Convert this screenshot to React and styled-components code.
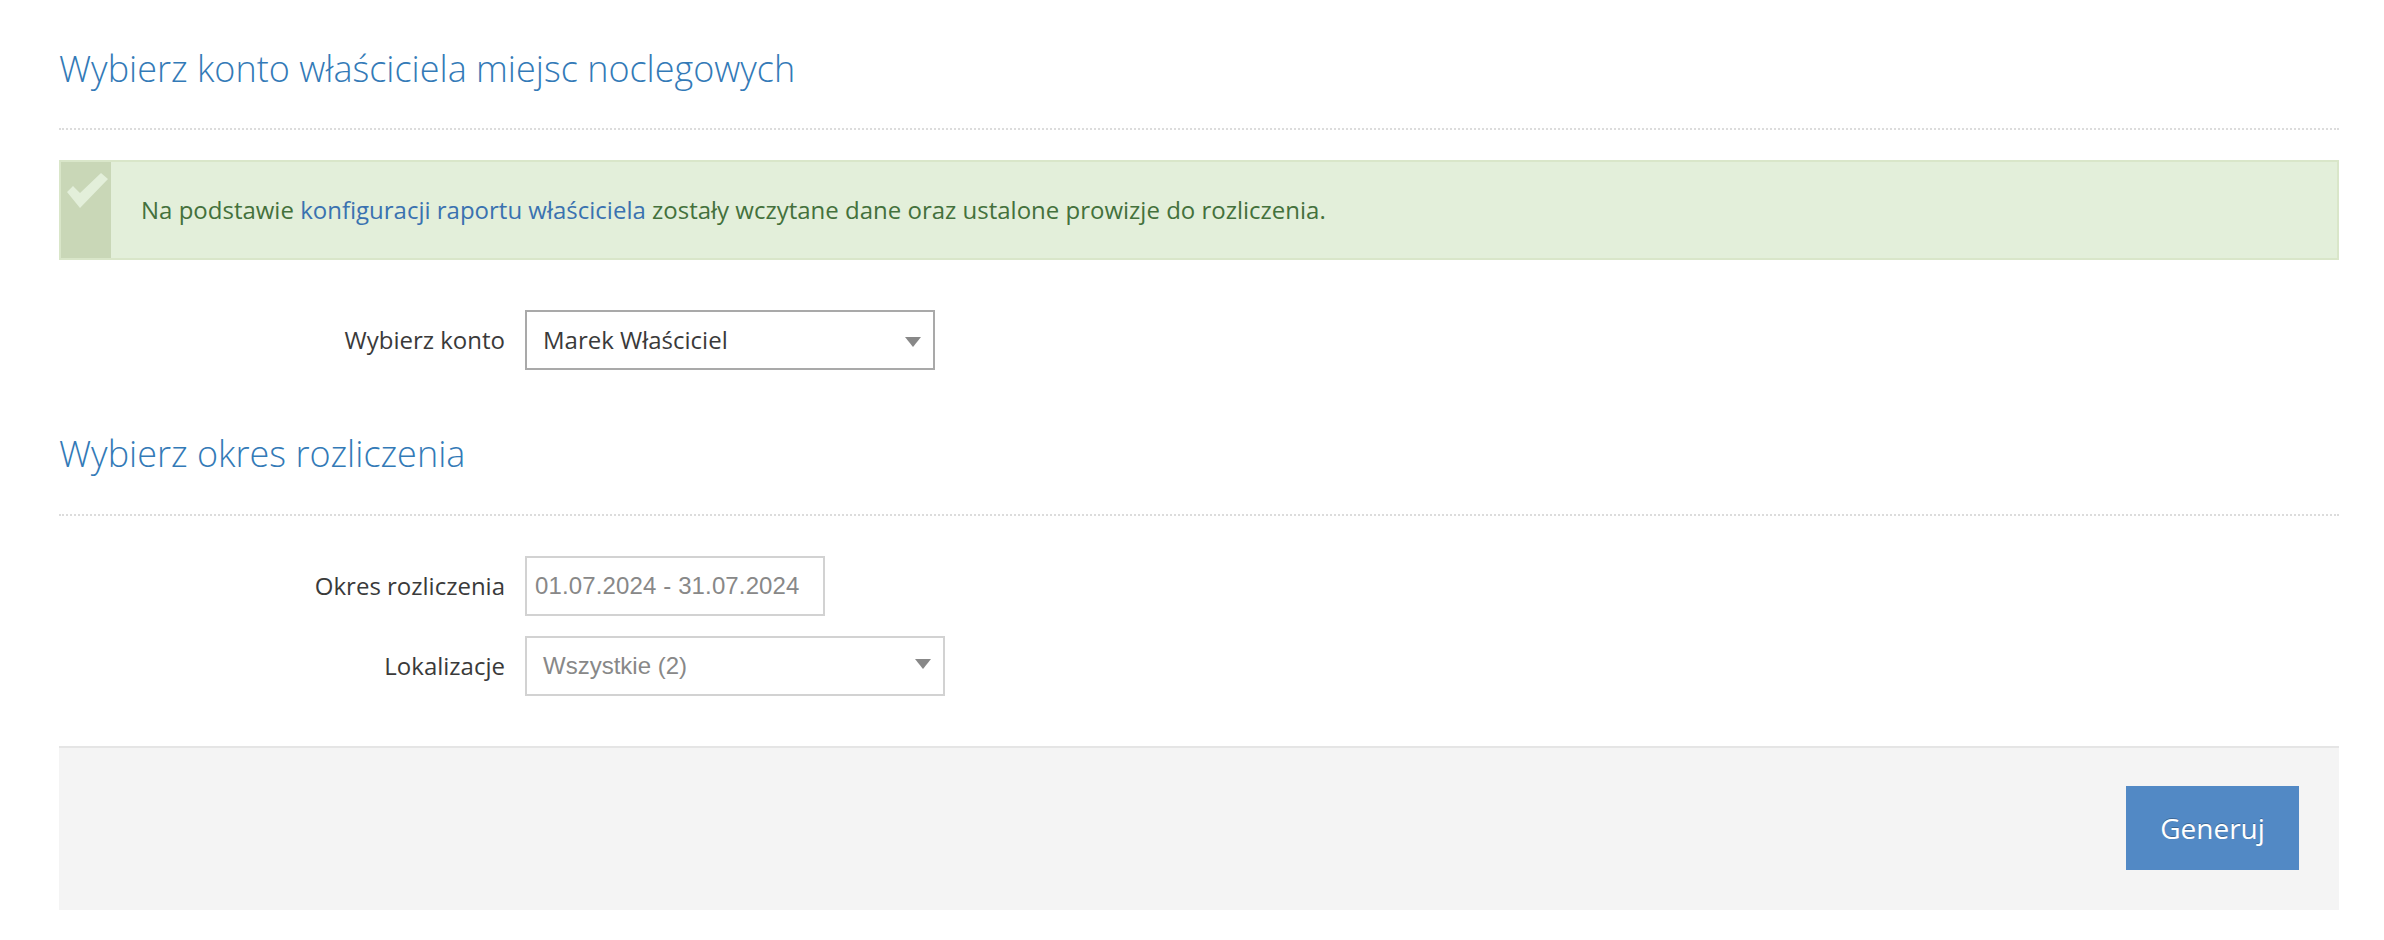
import React from "react";
import styled, { createGlobalStyle } from "styled-components";

const Global = createGlobalStyle`
  html, body { margin: 0; padding: 0; background: #fff; }
  body { font-family: "Open Sans", "Liberation Sans", sans-serif; color: #333; }
`;

const Page = styled.div`
  box-sizing: border-box;
  width: 2384px;
  height: 940px;
  padding: 0 45px 0 59px;
  overflow: hidden;
`;

const SectionHeader = styled.div`
  height: ${(p) => p.$height}px;
  box-sizing: border-box;
  border-bottom: 2px dotted #dcdcdc;
  display: flex;
  align-items: flex-start;
`;

const Heading = styled.h2`
  margin: ${(p) => p.$offset}px 0 0;
  font-size: 36px;
  line-height: 50px;
  font-weight: 300;
  color: #337ab7;
`;

const Alert = styled.div`
  box-sizing: border-box;
  height: 100px;
  margin-top: 30px;
  display: flex;
  background: #e3efda;
  border: 2px solid #d9e6c9;
`;

const AlertIcon = styled.div`
  box-sizing: border-box;
  width: 50px;
  flex: none;
  background: #c9d7b7;
  padding: 11px 0 0 6px;
`;

const AlertText = styled.div`
  display: flex;
  align-items: center;
  padding: 0 0 2px 30px;
  font-size: 24px;
  color: #44713c;
  white-space: pre;
`;

const AlertLink = styled.a`
  color: #3a72b0;
  text-decoration: none;
`;

const Form = styled.div`
  display: flex;
  flex-direction: column;
  gap: 20px;
  margin-top: ${(p) => p.$top}px;
`;

const Row = styled.div`
  display: flex;
  align-items: center;
`;

const Label = styled.label`
  width: 446px;
  margin-right: 20px;
  padding-bottom: 2px;
  text-align: right;
  font-size: 24px;
  color: #3a3a3a;
`;

const Select = styled.div`
  box-sizing: border-box;
  width: ${(p) => p.$width}px;
  height: 60px;
  display: flex;
  align-items: center;
  justify-content: space-between;
  padding: 0 12px ${(p) => (p.$muted ? 0 : 2)}px 16px;
  border: 2px solid ${(p) => (p.$muted ? "#d2d2d2" : "#a9a9a9")};
  font-family: ${(p) => (p.$muted ? '"Liberation Sans", Arial, sans-serif' : 'inherit')};
  font-size: 24px;
  color: ${(p) => (p.$muted ? "#888" : "#3a3a3a")};
`;

const Caret = styled.span`
  width: 0;
  height: 0;
  border-left: 8px solid transparent;
  border-right: 8px solid transparent;
  border-top: 10px solid #888;
  transform: translateY(${(p) => p.$shift}px);
`;

const DateInput = styled.div`
  box-sizing: border-box;
  width: 300px;
  height: 60px;
  display: flex;
  align-items: center;
  padding-left: 8px;
  border: 2px solid #d2d2d2;
  font-family: "Liberation Sans", Arial, sans-serif;
  font-size: 24px;
  letter-spacing: 0.13px;
  color: #888;
`;

const Footer = styled.div`
  box-sizing: border-box;
  height: 164px;
  margin-top: 50px;
  padding: 38px 40px 0 0;
  display: flex;
  justify-content: flex-end;
  align-items: flex-start;
  background: #f4f4f4;
  border-top: 2px solid #e5e5e5;
`;

const Button = styled.button`
  width: 173px;
  height: 84px;
  border: 0;
  padding: 0;
  background: #5289c5;
  color: #fff;
  font-family: inherit;
  font-size: 28px;
  text-shadow: 0 -1px 0 rgba(0, 0, 0, 0.25);
`;

export default function App() {
  return (
    <Page>
      <Global />
      <SectionHeader $height={130}>
        <Heading $offset={44}>Wybierz konto właściciela miejsc noclegowych</Heading>
      </SectionHeader>
      <Alert>
        <AlertIcon>
          <svg width="41" height="36" viewBox="0 0 41 36">
            <path d="M0 19 L6 13 L13 20 L34 0 L41 6 L13 35 Z" fill="#e3efda" />
          </svg>
        </AlertIcon>
        <AlertText>
          Na podstawie <AlertLink>konfiguracji raportu właściciela</AlertLink> zostały wczytane dane oraz ustalone prowizje do rozliczenia.
        </AlertText>
      </Alert>
      <Form $top={50}>
        <Row>
          <Label>Wybierz konto</Label>
          <Select $width={410}>
            Marek Właściciel
            <Caret $shift={3} />
          </Select>
        </Row>
      </Form>
      <SectionHeader $height={146}>
        <Heading $offset={59}>Wybierz okres rozliczenia</Heading>
      </SectionHeader>
      <Form $top={40}>
        <Row>
          <Label>Okres rozliczenia</Label>
          <DateInput>01.07.2024 - 31.07.2024</DateInput>
        </Row>
        <Row>
          <Label>Lokalizacje</Label>
          <Select $width={420} $muted>
            Wszystkie (2)
            <Caret $shift={-2} />
          </Select>
        </Row>
      </Form>
      <Footer>
        <Button>Generuj</Button>
      </Footer>
    </Page>
  );
}
